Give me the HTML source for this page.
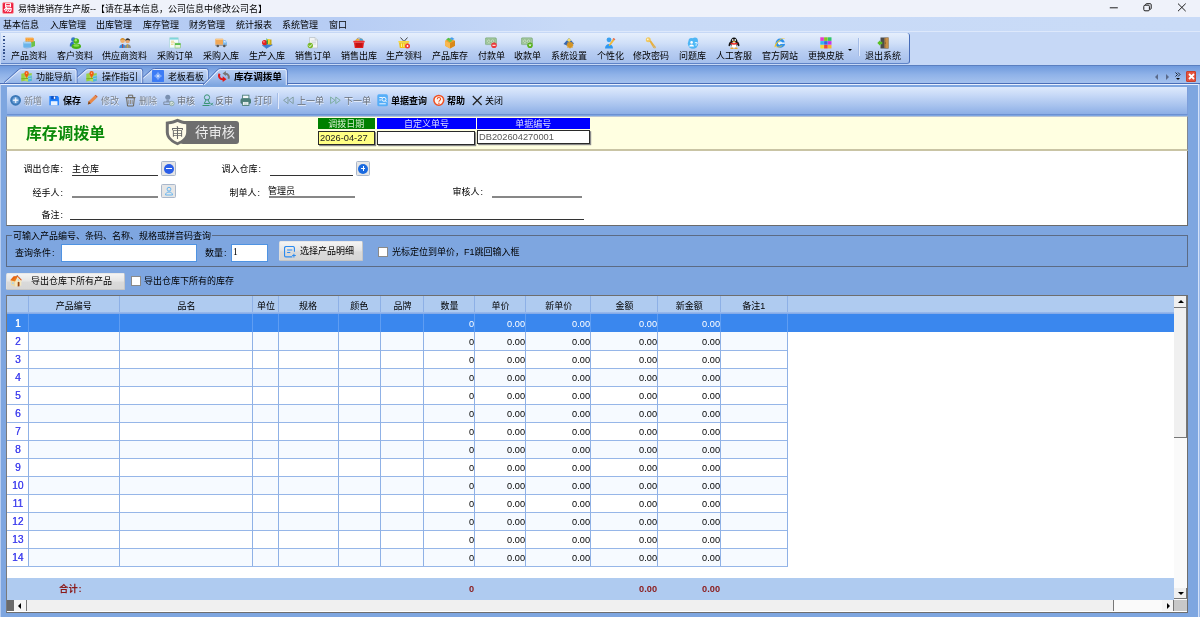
<!DOCTYPE html>
<html lang="zh-CN"><head><meta charset="utf-8"><title>易特进销存生产版</title>
<style>
*{box-sizing:border-box;margin:0;padding:0}
html,body{width:1200px;height:617px;overflow:hidden}
body{position:relative;background:#7ea6e0;font-family:"Liberation Sans","Noto Sans CJK SC",sans-serif;font-size:9px;color:#000;line-height:1}
.ab{position:absolute}
.t{position:absolute;white-space:nowrap;line-height:12px;height:12px;will-change:transform}
.c{text-align:center}
.r{text-align:right}
.b{font-weight:bold}
.co{display:inline-block;width:4.5px;text-align:center}
.g{color:#8290a8}
#title{left:0;top:0;width:1200px;height:17px;background:#eff2fa}
#menu{left:0;top:17px;width:1200px;height:15px;background:linear-gradient(90deg,#b4cbf3 0,#b7cdf4 340px,#c8daf7 570px,#c9dbf7 100%);border-bottom:1px solid #dde8fb}
#tbbg{left:0;top:32px;width:1200px;height:33px;background:#c6d8f6}
#tb{left:1px;top:33px;width:909px;height:31px;border-radius:0 3px 3px 0;background:linear-gradient(#e6effc 0%,#cfdff8 35%,#b9cef2 60%,#a6c0ec 100%);border-bottom:1px solid #5f84c8;border-right:1px solid #466cb8}
#tabs{left:0;top:64.5px;width:1200px;height:19.3px;background:linear-gradient(#6f9add 0%,#8fb2e8 50%,#a5c2ee 100%);border-top:1px solid #5a7fc0;border-bottom:1px solid #4a6eb8}
#frame{left:0;top:83.8px;width:1200px;height:534px;background:#7ea6e0;border-left:1px solid #b7cdf1;border-top:1px solid #eaf1fd}
#itb{left:6.5px;top:87px;width:1181.3px;height:27.5px;background:linear-gradient(#deeafc 0%,#c7d9f7 30%,#a8c3ee 68%,#8dafe6 100%);border-bottom:1px solid #6c91d2;border-right:1px solid #7c9edb}
#yel{left:6px;top:116.1px;width:1182px;height:34.9px;background:#ffffe1;border-bottom:2px solid #c9c4a4;border-left:0.7px solid #7f8794;border-right:0.7px solid #7f8794;border-top:0.7px solid #b9c4d4}
#wht{left:6px;top:151px;width:1182px;height:74.8px;background:#fff;border-left:0.7px solid #7f8794;border-right:0.8px solid #6a6a6a;border-bottom:0.8px solid #6a6a6a}
.ul{position:absolute;height:1px;background:#222}
.inp{position:absolute;background:#fff;border:1px solid #4f93e2}
.btn{position:absolute;background:linear-gradient(#f4f4f4 0%,#e6e6e6 45%,#dadada 55%,#d6d6d6 100%);border:1px solid #c6c6c6;border-top-color:#e8e8e8;border-left-color:#dedede;border-radius:1.5px}
.cb{position:absolute;width:10px;height:10px;background:#fff;border:1px solid #8a8a8a}
.hc{position:absolute;top:296px;height:17px;background:#afcbf0;border-right:1px solid #8fb0e4}
.vl{position:absolute;width:1px;background:#8fb1e6}
.hl{position:absolute;height:1px;background:#96b6e8}
</style></head><body>

<div class="ab" id="title"></div>
<div class="ab" style="left:1.5px;top:2px;width:12px;height:12px;border-radius:2px;background:#ee2040;border:0.5px solid #f8a0a8"></div>
<div class="t b" style="left:1.5px;top:2px;width:12px;text-align:center;color:#fff;font-size:9px">易</div>
<div class="t" style="left:18px;top:2.5px">易特进销存生产版--【请在基本信息，公司信息中修改公司名】</div>
<svg class="ab" style="left:1100px;top:0" width="100" height="17" viewBox="0 0 100 17"><g stroke="#1e1e1e" stroke-width="1" fill="none"><path d="M9.8 7.8h8"/><rect x="43.8" y="5.2" width="5.6" height="5.6" rx="1.2"/><path d="M45.6 5v-0.3q0-1 1-1h3.6q1 0 1 1v3.6q0 1-1 1h-0.5"/><path d="M78 3.6l7.7 7.6M85.7 3.6l-7.7 7.6"/></g></svg>
<div class="ab" id="menu"></div>
<div class="t" style="left:3px;top:18.5px">基本信息</div>
<div class="t" style="left:49.5px;top:18.5px">入库管理</div>
<div class="t" style="left:96.3px;top:18.5px">出库管理</div>
<div class="t" style="left:142.7px;top:18.5px">库存管理</div>
<div class="t" style="left:189px;top:18.5px">财务管理</div>
<div class="t" style="left:235.5px;top:18.5px">统计报表</div>
<div class="t" style="left:282px;top:18.5px">系统管理</div>
<div class="t" style="left:328.7px;top:18.5px">窗口</div>
<div class="ab" id="tbbg"></div><div class="ab" id="tb"></div>
<div class="ab" style="left:3px;top:36px;width:2px;height:24px;background:repeating-linear-gradient(#34508c 0 1.5px,transparent 1.5px 3.3px)"></div>
<svg class="ab" style="left:23.0px;top:36.6px" width="12" height="12" viewBox="0 0 12 12"><path d="M2.5 0.8h7.5l0.8 0.8v4.4h-8.3z" fill="#f59a2e"/><path d="M2.5 0.8h7.5l0.8 0.8h-8.3z" fill="#fbc070"/><path d="M4.5 2v4M7 2v4M2.5 3.5h8" stroke="#f8b860" stroke-width="0.5"/><rect x="0.3" y="4.8" width="8" height="6" rx="0.8" fill="#6ab4ea"/><rect x="0.3" y="4.8" width="8" height="1.6" rx="0.8" fill="#a8d4f4"/><path d="M8.3 5.2l3.7-1.2v5l-3.7 1.5z" fill="#6cc24a"/><path d="M0.8 11l3 0.8 4.5-1z" fill="#a0b8d8"/></svg>
<div class="t c" style="left:9.0px;width:40px;top:49.5px">产品资料</div>
<svg class="ab" style="left:68.7px;top:36.6px" width="12" height="12" viewBox="0 0 12 12"><circle cx="4.3" cy="2.5" r="2.2" fill="#3a78c8"/><path d="M0.8 9.5c-0.3-4 2-5 4-5v5z" fill="#3570c0"/><circle cx="7.3" cy="4" r="2.8" fill="#4cb818"/><circle cx="6.8" cy="3.3" r="1.2" fill="#a8e870"/><ellipse cx="7.3" cy="9.2" rx="4.7" ry="2.7" fill="#46b014"/><ellipse cx="7.3" cy="8.5" rx="3" ry="1.2" fill="#8ade50"/></svg>
<div class="t c" style="left:54.7px;width:40px;top:49.5px">客户资料</div>
<svg class="ab" style="left:118.8px;top:36.6px" width="12" height="12" viewBox="0 0 12 12"><circle cx="3.6" cy="3.8" r="2.3" fill="#f0b070"/><path d="M1.2 3.5c0-3.5 5-3.5 5 0-1.5-1.2-3.5-1.2-5 0z" fill="#d08a20"/><path d="M0.3 11c0-5 6.6-5 6.6 0z" fill="#3a8ee0"/><path d="M3.6 7v4" stroke="#c03030" stroke-width="0.8"/><circle cx="8.6" cy="4" r="2.3" fill="#e8a870"/><path d="M6.2 3.8c0-3.5 5-3.5 5 0-1.5-1.2-3.5-1.2-5 0z" fill="#333"/><path d="M5.5 11c0-5 6.5-5 6.5 0z" fill="#8c8c8c"/><path d="M8.6 7.2v3.8" stroke="#d0b030" stroke-width="0.8"/></svg>
<div class="t c" style="left:100.3px;width:49px;top:49.5px">供应商资料</div>
<svg class="ab" style="left:169.3px;top:36.6px" width="12" height="12" viewBox="0 0 12 12"><rect x="0.5" y="0.5" width="9" height="10.5" rx="0.6" fill="#f4fbfb" stroke="#a8d4d8" stroke-width="0.7"/><rect x="0.8" y="0.8" width="8.4" height="1.8" fill="#7fd6dc"/><path d="M2 4.2h3M2 5.8h4M2 7.4h2.5" stroke="#e8c860" stroke-width="0.7"/><rect x="6" y="6.3" width="5.5" height="4.7" rx="0.5" fill="#e8f4e0" stroke="#7cc060" stroke-width="0.6"/><rect x="6" y="6.3" width="5.5" height="1.6" fill="#4cb840"/></svg>
<div class="t c" style="left:155.3px;width:40px;top:49.5px">采购订单</div>
<svg class="ab" style="left:215.3px;top:36.6px" width="12" height="12" viewBox="0 0 12 12"><rect x="0.3" y="1.8" width="7.8" height="6" rx="0.5" fill="#f0a858"/><rect x="0.3" y="1.8" width="7.8" height="1.2" fill="#f8c888"/><path d="M8.1 3.2h2.4l1.4 2.3v2.8h-3.8z" fill="#7ab8ee"/><path d="M8.8 3.9h1.5l0.9 1.5h-2.4z" fill="#d8ecfc"/><rect x="0.3" y="7.8" width="11.6" height="0.9" fill="#8a8a8a"/><circle cx="2.8" cy="9" r="1.3" fill="#555"/><circle cx="9.3" cy="9" r="1.3" fill="#555"/></svg>
<div class="t c" style="left:201.3px;width:40px;top:49.5px">采购入库</div>
<svg class="ab" style="left:261.0px;top:36.6px" width="12" height="12" viewBox="0 0 12 12"><path d="M1.2 8l6.3-3 4.3 3-6 3.5z" fill="#3c7cd4"/><path d="M1.2 8l4.6 3.5v0.5l-4.6-3.5z" fill="#2a5ca8"/><circle cx="3.6" cy="5.6" r="2.6" fill="#e42020"/><circle cx="2.9" cy="4.8" r="0.9" fill="#f88"/><rect x="6.5" y="2" width="2.3" height="5.5" fill="#f4d428"/><rect x="8.8" y="2.5" width="1.7" height="5.5" fill="#c8a818"/><path d="M5.5 1l1.5 2.5v3.5h-1.5z" fill="#38a038"/></svg>
<div class="t c" style="left:247.0px;width:40px;top:49.5px">生产入库</div>
<svg class="ab" style="left:306.8px;top:36.6px" width="12" height="12" viewBox="0 0 12 12"><path d="M2.5 0.5h5.5l2.5 2.5v8h-8z" fill="#f2f4f4" stroke="#b8c0c4" stroke-width="0.7"/><path d="M8 0.5v2.5h2.5" fill="#dde2e4" stroke="#b8c0c4" stroke-width="0.5"/><path d="M4.5 4h4.5M4.5 5.5h4.5M6 7h3" stroke="#c8ced0" stroke-width="0.6"/><circle cx="3.3" cy="8.5" r="2.7" fill="#78b828"/><path d="M1.9 8.5l1 1.2 1.9-2.3" stroke="#fff" stroke-width="0.9" fill="none"/></svg>
<div class="t c" style="left:292.8px;width:40px;top:49.5px">销售订单</div>
<svg class="ab" style="left:352.7px;top:36.6px" width="12" height="12" viewBox="0 0 12 12"><path d="M3 4c0-2 1.5-3 3-3s3 1 3 3" fill="none" stroke="#888" stroke-width="0.8"/><path d="M2 3.8l2-2 2.5 0.5 2.5-0.8 1.5 2.3z" fill="#f0b030"/><path d="M6.5 2l2.5-0.5 1.5 2.3h-4z" fill="#40a0e0"/><rect x="0.3" y="3.8" width="11.4" height="1.8" rx="0.6" fill="#f03030"/><path d="M1 5.6h10l-0.8 5.4h-8.4z" fill="#e01818"/><path d="M3 7h6M3 9h6" stroke="#a01010" stroke-width="0.9"/></svg>
<div class="t c" style="left:338.7px;width:40px;top:49.5px">销售出库</div>
<svg class="ab" style="left:398.0px;top:36.6px" width="12" height="12" viewBox="0 0 12 12"><path d="M2.5 0.5l3.5 4 3.5-4" fill="none" stroke="#333" stroke-width="0.9"/><rect x="0.3" y="4" width="11" height="1.6" rx="0.5" fill="#f8d838"/><path d="M1 5.6h9.6l-0.8 5.4h-8z" fill="#f0c418"/><path d="M3.5 6.5v3.5M5.8 6.5v3.5M8 6.5v2" stroke="#fff4a0" stroke-width="0.9"/><circle cx="9.5" cy="9" r="2.5" fill="#f03838"/><circle cx="9.5" cy="9" r="0.9" fill="#fff"/></svg>
<div class="t c" style="left:384.0px;width:40px;top:49.5px">生产领料</div>
<svg class="ab" style="left:443.7px;top:36.6px" width="12" height="12" viewBox="0 0 12 12"><path d="M1 3.8l5-2.3 5 2.3v5l-5 2.7-5-2.7z" fill="#f0a030"/><path d="M6 6.2l5-2.4v5l-5 2.7z" fill="#d88818"/><path d="M1 3.8l5 2.4v5.3l-5-2.7z" fill="#f8b850"/><path d="M2 2.6l2.5-1.8 2.5 1.5-2.5 1.5z" fill="#58c040"/><path d="M5.5 1.2l2.5-1 2.5 1.8-2.5 1.3z" fill="#48a0e8"/><path d="M4 4l2.5-1.5 2 1.3-2.5 1.5z" fill="#68c848"/></svg>
<div class="t c" style="left:429.7px;width:40px;top:49.5px">产品库存</div>
<svg class="ab" style="left:485.0px;top:36.6px" width="12" height="12" viewBox="0 0 12 12"><rect x="0.2" y="0.8" width="11.3" height="6.8" rx="1.2" fill="#8fb98c" stroke="#7aa878" stroke-width="0.5"/><rect x="1.3" y="1.9" width="9.1" height="4.6" rx="0.6" fill="none" stroke="#b8d8b0" stroke-width="0.5"/><circle cx="3.8" cy="4.2" r="1.3" fill="none" stroke="#dcecd4" stroke-width="0.7"/><circle cx="7.6" cy="4.2" r="1.3" fill="none" stroke="#dcecd4" stroke-width="0.7"/><circle cx="9" cy="8.3" r="2.8" fill="#ea3a3a"/><rect x="7.4" y="7.8" width="3.2" height="1" fill="#fff"/></svg>
<div class="t c" style="left:475.5px;width:31px;top:49.5px">付款单</div>
<svg class="ab" style="left:521.3px;top:36.6px" width="12" height="12" viewBox="0 0 12 12"><rect x="0.2" y="0.8" width="11.3" height="6.8" rx="1.2" fill="#8fb98c" stroke="#7aa878" stroke-width="0.5"/><rect x="1.3" y="1.9" width="9.1" height="4.6" rx="0.6" fill="none" stroke="#b8d8b0" stroke-width="0.5"/><circle cx="3.8" cy="4.2" r="1.3" fill="none" stroke="#dcecd4" stroke-width="0.7"/><circle cx="7.6" cy="4.2" r="1.3" fill="none" stroke="#dcecd4" stroke-width="0.7"/><circle cx="9" cy="8.3" r="2.8" fill="#58b020"/><path d="M7.5 7.6h3l-1.5 1.8z" fill="#fff"/></svg>
<div class="t c" style="left:511.8px;width:31px;top:49.5px">收款单</div>
<svg class="ab" style="left:562.7px;top:36.6px" width="12" height="12" viewBox="0 0 12 12"><path d="M0.5 7l5.5-6 5 5.5-5 3z" fill="#3868b0"/><path d="M6 1l-2 2.5 2.2 1.5 2-1.8z" fill="#f4e070"/><circle cx="7" cy="8" r="3" fill="#d89828"/><circle cx="7" cy="8" r="1.2" fill="#503818"/><path d="M7 4.5v7M3.5 8h7M4.5 5.5l5 5M9.5 5.5l-5 5" stroke="#d89828" stroke-width="0.9"/></svg>
<div class="t c" style="left:548.7px;width:40px;top:49.5px">系统设置</div>
<svg class="ab" style="left:604.0px;top:36.6px" width="12" height="12" viewBox="0 0 12 12"><circle cx="5" cy="2.8" r="2.4" fill="#38a0f0"/><path d="M1 11.5c0-6 8-6 8 0z" fill="#2e98f0"/><path d="M9.5 1l1.8 1.2-5 6.3-1.5 0.5 0.2-1.5z" fill="#f0b838"/><path d="M9.5 1l1.8 1.2-0.8 1-1.8-1.2z" fill="#e86060"/></svg>
<div class="t c" style="left:594.5px;width:31px;top:49.5px">个性化</div>
<svg class="ab" style="left:645.3px;top:36.6px" width="12" height="12" viewBox="0 0 12 12"><circle cx="3.3" cy="2.8" r="2.5" fill="#f0c860"/><circle cx="2.8" cy="2.3" r="0.9" fill="#fff4d0"/><path d="M4.3 4.3l1.5-1 5.2 7-0.8 1.2-1.8-0.5z" fill="#e8b040"/><path d="M8 9.5l1.5-1M9 10.8l1.5-1" stroke="#b8b8b8" stroke-width="0.8"/></svg>
<div class="t c" style="left:631.3px;width:40px;top:49.5px">修改密码</div>
<svg class="ab" style="left:686.7px;top:36.6px" width="12" height="12" viewBox="0 0 12 12"><circle cx="6" cy="6.6" r="5.2" fill="#4eb6f5"/><circle cx="4.2" cy="3.6" r="2.6" fill="#4eb6f5"/><circle cx="8" cy="3.4" r="2.9" fill="#4eb6f5"/><circle cx="4.6" cy="5.4" r="1.3" fill="#fff"/><path d="M2.2 9.6c0-2.9 4.8-2.9 4.8 0z" fill="#fff"/><text x="7.3" y="9" font-size="5.5" font-weight="bold" fill="#fff" font-family="Liberation Sans,sans-serif">?</text></svg>
<div class="t c" style="left:677.2px;width:31px;top:49.5px">问题库</div>
<svg class="ab" style="left:728.0px;top:36.6px" width="12" height="12" viewBox="0 0 12 12"><ellipse cx="6" cy="5.5" rx="3.6" ry="5" fill="#111"/><ellipse cx="1.8" cy="7" rx="1" ry="2.3" fill="#111" transform="rotate(20 1.8 7)"/><ellipse cx="10.2" cy="7" rx="1" ry="2.3" fill="#111" transform="rotate(-20 10.2 7)"/><ellipse cx="6" cy="8" rx="2.5" ry="2.9" fill="#fff"/><ellipse cx="4.8" cy="3" rx="0.8" ry="1.1" fill="#fff"/><ellipse cx="7.2" cy="3" rx="0.8" ry="1.1" fill="#fff"/><ellipse cx="6" cy="4.7" rx="1.5" ry="0.6" fill="#f0a020"/><path d="M2.6 5.6c2 1 5 1 6.8 0v1.5c-2 1-5 1-6.8 0z" fill="#e82020"/><ellipse cx="4" cy="11.2" rx="1.8" ry="0.8" fill="#f0a020"/><ellipse cx="8" cy="11.2" rx="1.8" ry="0.8" fill="#f0a020"/></svg>
<div class="t c" style="left:714.0px;width:40px;top:49.5px">人工客服</div>
<svg class="ab" style="left:774.0px;top:36.6px" width="12" height="12" viewBox="0 0 12 12"><circle cx="6.2" cy="6.2" r="4.6" fill="#2a90ec"/><circle cx="6.2" cy="6.2" r="2" fill="#c8e4fc"/><rect x="4" y="5.5" width="6.8" height="1.4" fill="#fff"/><rect x="6.2" y="6.9" width="4.6" height="1.6" fill="#2a90ec"/><path d="M0.8 10.5c-1.5-3 6-11 10.5-9.3-4-0.3-9 5-9.5 8.3z" fill="#f4c428"/><path d="M1.8 9.5c1.5 1.5 5 0 6.5-1" fill="none" stroke="#f4c428" stroke-width="0.8"/></svg>
<div class="t c" style="left:760.0px;width:40px;top:49.5px">官方网站</div>
<svg class="ab" style="left:819.7px;top:36.6px" width="12" height="12" viewBox="0 0 12 12"><rect x="0.3" y="0.3" width="3.6" height="3.6" fill="#e838c8"/><rect x="4.1" y="0.3" width="3.6" height="3.6" fill="#84c420"/><rect x="7.9" y="0.3" width="3.6" height="3.6" fill="#30c468"/><rect x="0.3" y="4.1" width="3.6" height="3.6" fill="#30b4f0"/><rect x="4.1" y="4.1" width="3.6" height="3.6" fill="#3464e4"/><rect x="7.9" y="4.1" width="3.6" height="3.6" fill="#c434e4"/><rect x="0.3" y="7.9" width="3.6" height="3.6" fill="#f4d834"/><rect x="4.1" y="7.9" width="3.6" height="3.6" fill="#f04830"/><rect x="7.9" y="7.9" width="3.6" height="3.6" fill="#f4b434"/></svg>
<div class="t c" style="left:805.7px;width:40px;top:49.5px">更换皮肤</div>
<svg class="ab" style="left:877.0px;top:36.6px" width="12" height="12" viewBox="0 0 12 12"><rect x="3.5" y="0.5" width="8" height="11" fill="#4c4c4c"/><path d="M7.5 1l4 -0.5v11l-4 -0.5z" fill="#c8924a"/><path d="M8.5 1v10" stroke="#a87030" stroke-width="0.6"/><circle cx="8.3" cy="6" r="0.5" fill="#604010"/><path d="M0.3 4.8h2.2v-1.6l2.8 2.8-2.8 2.8v-1.6h-2.2z" fill="#58c020" transform="rotate(180 2.8 6)"/></svg>
<div class="t c" style="left:863.0px;width:40px;top:49.5px">退出系统</div>
<div class="ab" style="left:848px;top:48.5px;width:0;height:0;border:2px solid transparent;border-top:2.5px solid #000"></div>
<div class="ab" style="left:857.5px;top:37.5px;width:1px;height:18px;background:#a4bce6"></div><div class="ab" style="left:858.5px;top:37.5px;width:1px;height:18px;background:#e4ecfb"></div>
<div class="ab" id="tabs"></div>
<svg class="ab" width="0" height="0"><defs><linearGradient id="gi" x1="0" y1="0" x2="0" y2="1"><stop offset="0" stop-color="#c9daf7"/><stop offset="1" stop-color="#94b5e8"/></linearGradient><linearGradient id="ga" x1="0" y1="0" x2="0" y2="1"><stop offset="0" stop-color="#bcd2f4"/><stop offset="0.5" stop-color="#a3bfed"/><stop offset="1" stop-color="#7ea6e0"/></linearGradient></defs></svg>
<svg class="ab" style="left:137px;top:67.9px;z-index:0" width="73.30000000000001" height="15" viewBox="0 0 73.30000000000001 15"><path d="M-0.5 15L14.2 1.9Q15.6 0.5 17.6 0.5H69.30000000000001Q71.30000000000001 0.5 71.30000000000001 3V15z" fill="url(#gi)"/><path d="M-0.5 15L14.2 1.9Q15.6 0.5 17.6 0.5H69.30000000000001Q71.30000000000001 0.5 71.30000000000001 3V15" fill="none" stroke="#4468b4" stroke-width="0.9"/><path d="M1 15L15 2.8Q16.2 1.5 17.9 1.5H68.9Q70.30000000000001 1.5 70.30000000000001 3.4V15" fill="none" stroke="#f0f5fe" stroke-width="0.9" stroke-opacity="0.85"/></svg>
<svg class="ab" style="left:152.2px;top:70.2px;z-index:3" width="12" height="12" viewBox="0 0 11 11"><rect x="0" y="0" width="11" height="11" rx="0.8" fill="#3d7cf5"/><circle cx="5.5" cy="5.5" r="2.1" fill="#6a9cf8" stroke="#a9c8ff" stroke-width="0.6"/><path d="M5.5 1.8v7.4M1.8 5.5h7.4" stroke="#a9c8ff" stroke-width="0.6"/><circle cx="5.5" cy="5.5" r="0.9" fill="#e4eeff"/></svg>
<div class="t" style="left:167.7px;top:71px">老板看板</div>
<svg class="ab" style="left:71px;top:67.9px;z-index:0" width="73.69999999999999" height="15" viewBox="0 0 73.69999999999999 15"><path d="M-0.5 15L14.2 1.9Q15.6 0.5 17.6 0.5H69.69999999999999Q71.69999999999999 0.5 71.69999999999999 3V15z" fill="url(#gi)"/><path d="M-0.5 15L14.2 1.9Q15.6 0.5 17.6 0.5H69.69999999999999Q71.69999999999999 0.5 71.69999999999999 3V15" fill="none" stroke="#4468b4" stroke-width="0.9"/><path d="M1 15L15 2.8Q16.2 1.5 17.9 1.5H69.29999999999998Q70.69999999999999 1.5 70.69999999999999 3.4V15" fill="none" stroke="#f0f5fe" stroke-width="0.9" stroke-opacity="0.85"/></svg>
<svg class="ab" style="left:86px;top:71px;z-index:3" width="11" height="11" viewBox="0 0 11 11"><path d="M0.3 2.8l3.4-0.8 3.4 0.8 3.6-0.8v7.7l-3.6 0.8-3.4-0.8-3.4 0.8z" fill="#9ad044"/><path d="M3.7 2l3.4 0.8v7.7l-3.4-0.8z" fill="#b4dc6c"/><path d="M0.3 7.3l10.4-0.5v1l-10.4 0.5z" fill="#78b020"/><path d="M7.1 5l3.6-0.8v5.5l-3.6 0.8z" fill="#4ab4e8"/><path d="M7.1 5.3l3.6-0.6M7.1 7.8l3.6-0.6" stroke="#b8e4c0" stroke-width="0.7"/><path d="M5.6 0a2.2 2.2 0 0 1 2.2 2.2c0 1.7-2.2 4.8-2.2 4.8s-2.2-3.1-2.2-4.8a2.2 2.2 0 0 1 2.2-2.2z" fill="#f05c10"/><circle cx="5.6" cy="2.1" r="0.7" fill="#ffe0c0"/></svg>
<div class="t" style="left:101.7px;top:71px">操作指引</div>
<svg class="ab" style="left:4px;top:67.9px;z-index:0" width="75" height="15" viewBox="0 0 75 15"><path d="M-0.5 15L14.2 1.9Q15.6 0.5 17.6 0.5H71Q73 0.5 73 3V15z" fill="url(#gi)"/><path d="M-0.5 15L14.2 1.9Q15.6 0.5 17.6 0.5H71Q73 0.5 73 3V15" fill="none" stroke="#4468b4" stroke-width="0.9"/><path d="M1 15L15 2.8Q16.2 1.5 17.9 1.5H70.6Q72 1.5 72 3.4V15" fill="none" stroke="#f0f5fe" stroke-width="0.9" stroke-opacity="0.85"/></svg>
<svg class="ab" style="left:20.5px;top:71px;z-index:3" width="11" height="11" viewBox="0 0 11 11"><path d="M0.3 2.8l3.4-0.8 3.4 0.8 3.6-0.8v7.7l-3.6 0.8-3.4-0.8-3.4 0.8z" fill="#9ad044"/><path d="M3.7 2l3.4 0.8v7.7l-3.4-0.8z" fill="#b4dc6c"/><path d="M0.3 7.3l10.4-0.5v1l-10.4 0.5z" fill="#78b020"/><path d="M7.1 5l3.6-0.8v5.5l-3.6 0.8z" fill="#4ab4e8"/><path d="M7.1 5.3l3.6-0.6M7.1 7.8l3.6-0.6" stroke="#b8e4c0" stroke-width="0.7"/><path d="M5.6 0a2.2 2.2 0 0 1 2.2 2.2c0 1.7-2.2 4.8-2.2 4.8s-2.2-3.1-2.2-4.8a2.2 2.2 0 0 1 2.2-2.2z" fill="#f05c10"/><circle cx="5.6" cy="2.1" r="0.7" fill="#ffe0c0"/></svg>
<div class="t" style="left:35.7px;top:71px">功能导航</div>
<svg class="ab" style="left:203px;top:67.9px;z-index:2" width="86.30000000000001" height="17.2" viewBox="0 0 86.30000000000001 17.2"><path d="M-0.5 17.2L14.2 1.9Q15.6 0.5 17.6 0.5H82.30000000000001Q84.30000000000001 0.5 84.30000000000001 3V17.2z" fill="url(#ga)"/><path d="M-0.5 17.2L14.2 1.9Q15.6 0.5 17.6 0.5H82.30000000000001Q84.30000000000001 0.5 84.30000000000001 3V17.2" fill="none" stroke="#4468b4" stroke-width="0.9"/><path d="M1 17.2L15 2.8Q16.2 1.5 17.9 1.5H81.9Q83.30000000000001 1.5 83.30000000000001 3.4V17.2" fill="none" stroke="#f0f5fe" stroke-width="0.9" stroke-opacity="1"/></svg>
<svg class="ab" style="left:218px;top:70.2px;z-index:3" width="12" height="12" viewBox="0 0 11 11"><path d="M9.5 8a3 3 0 0 0-3-4.5" fill="none" stroke="#777" stroke-width="1.8"/><path d="M7.2 1l-3 2.3 3 2.2z" fill="#777"/><path d="M1.5 3.5a3.3 3.3 0 0 0 3.3 5" fill="none" stroke="#e01818" stroke-width="1.9"/><path d="M4.3 5.8l3.5 2.7-3.5 2.5z" fill="#e01818"/></svg>
<div class="t b" style="left:234.2px;top:71px;font-size:9.6px;z-index:3">库存调拨单</div>
<div class="ab" style="left:1154.5px;top:73.7px;width:0;height:0;border:3px solid transparent;border-right:3.5px solid #5a6a8a;border-left:none"></div>
<div class="ab" style="left:1165.5px;top:73.7px;width:0;height:0;border:3px solid transparent;border-left:3.5px solid #5a6a8a;border-right:none"></div>
<svg class="ab" style="left:1175px;top:72.3px" width="6" height="5" viewBox="0 0 6 5"><path d="M0.5 0.5l2 2-2 2M3 0.5l2 2-2 2" fill="none" stroke="#000" stroke-width="0.8"/></svg>
<div class="ab" style="left:1175.7px;top:78px;width:0;height:0;border:2px solid transparent;border-top:2.5px solid #000"></div>
<div class="ab" style="left:1185.6px;top:71.2px;width:10.8px;height:10.8px;background:#e4523c;border:1px solid #c8402c;border-radius:1px"></div>
<svg class="ab" style="left:1185.5px;top:71.1px" width="11" height="11" viewBox="0 0 11 11"><path d="M3 3l5 5M8 3l-5 5" stroke="#fff" stroke-width="1.8"/></svg>
<div class="ab" id="frame"></div>
<div class="ab" style="left:1197.7px;top:84px;width:0.8px;height:533px;background:#d4e2f9"></div><div class="ab" style="left:1198.5px;top:84px;width:1.5px;height:533px;background:#9fbcea"></div>
<div class="ab" id="itb"></div>
<svg class="ab" style="left:10.2px;top:94.2px" width="12" height="13" viewBox="0 0 12 13"><circle cx="5.6" cy="6.3" r="5.4" fill="#3b78b8"/><circle cx="5.6" cy="6.3" r="3.4" fill="#6a9ed4"/><path d="M5.6 3.6v5.4M2.9 6.3h5.4" stroke="#d8e6f8" stroke-width="1.5"/><circle cx="5.6" cy="6.3" r="1.1" fill="#eef4fc"/></svg>
<div class="t " style="left:24px;top:94.7px;color:#7c828a;text-shadow:0.5px 0.5px 0 rgba(255,255,255,0.75)">新增</div>
<svg class="ab" style="left:49px;top:94.2px" width="12" height="13" viewBox="0 0 12 13"><path d="M0.4 2h8.3l1.2 1.2v8h-9.5z" fill="#1e80ff"/><rect x="2.2" y="2" width="5" height="3.3" fill="#1050c0"/><rect x="4.8" y="2.5" width="1.5" height="2.3" fill="#fff"/><rect x="1.8" y="7.2" width="6.7" height="4" fill="#e8f2ff"/></svg>
<div class="t b" style="left:62.5px;top:94.7px">保存</div>
<svg class="ab" style="left:87.3px;top:94.2px" width="12" height="13" viewBox="0 0 12 13"><path d="M0.8 10.5l0.9-3.2 6-5.8 2.2 2.2-6 5.8z" fill="#e88848"/><path d="M0.8 10.5l0.9-3.2 2.2 2.2z" fill="#7a4820"/><path d="M7.7 1.5l1-0.8 2 2-0.8 1z" fill="#d06030"/></svg>
<div class="t " style="left:100.7px;top:94.7px;color:#7c828a;text-shadow:0.5px 0.5px 0 rgba(255,255,255,0.75)">修改</div>
<svg class="ab" style="left:125px;top:94.2px" width="12" height="13" viewBox="0 0 12 13"><path d="M1.6 3.8h7.8l-0.9 8.2h-6z" fill="none" stroke="#6c665a" stroke-width="1"/><path d="M0.5 3.6h10M3.3 1.2h4.4v2.2" fill="none" stroke="#6c665a" stroke-width="1"/><path d="M3.6 1.2v2.2" stroke="#6c665a" stroke-width="1"/><path d="M3.8 5.8v4.2M5.5 5.8v4.2M7.2 5.8v4.2" stroke="#8a8070" stroke-width="0.8"/></svg>
<div class="t " style="left:139px;top:94.7px;color:#7c828a;text-shadow:0.5px 0.5px 0 rgba(255,255,255,0.75)">删除</div>
<svg class="ab" style="left:163px;top:94.2px" width="12" height="13" viewBox="0 0 12 13"><circle cx="4.8" cy="3.2" r="2.5" fill="#7a90b0"/><path d="M3.8 5.5h2l0.8 2.5h-3.6z" fill="#8a9cb8"/><path d="M0.8 8h8v2.5h-8z" fill="none" stroke="#7a8aa0" stroke-width="0.9"/><circle cx="8.8" cy="9.5" r="2.3" fill="#dfe8e4" stroke="#7a9a90" stroke-width="0.7"/><path d="M7.8 9.5l0.8 0.8 1.3-1.6" fill="none" stroke="#5a8a78" stroke-width="0.7"/></svg>
<div class="t " style="left:177px;top:94.7px;color:#686e76;text-shadow:0.5px 0.5px 0 rgba(255,255,255,0.75)">审核</div>
<svg class="ab" style="left:201.5px;top:94.2px" width="12" height="13" viewBox="0 0 12 13"><circle cx="5" cy="3.4" r="2.6" fill="none" stroke="#3a9474" stroke-width="1"/><path d="M4 6l-1.8 3.5h5.6l-1.8-3.5" fill="none" stroke="#3a9474" stroke-width="1"/><path d="M0.5 11.5h7" stroke="#3a9474" stroke-width="1"/><path d="M8.3 8.8l2.7 2.7M11 8.8l-2.7 2.7" stroke="#3a9474" stroke-width="0.9"/></svg>
<div class="t " style="left:215px;top:94.7px;color:#686e76;text-shadow:0.5px 0.5px 0 rgba(255,255,255,0.75)">反审</div>
<svg class="ab" style="left:240px;top:94.2px" width="12" height="13" viewBox="0 0 12 13"><rect x="0.5" y="4.3" width="10.5" height="5.7" rx="1.8" fill="#4c7e78"/><rect x="2.6" y="1.2" width="6.3" height="3.4" fill="#f4f8f8" stroke="#4c7e78" stroke-width="0.9"/><rect x="2.6" y="7.5" width="6.3" height="4" fill="#f4f8f8" stroke="#4c7e78" stroke-width="0.9"/><path d="M4 9h3.5M4 10.3h3.5" stroke="#8aa8a4" stroke-width="0.5"/></svg>
<div class="t " style="left:254.3px;top:94.7px;color:#686e76;text-shadow:0.5px 0.5px 0 rgba(255,255,255,0.75)">打印</div>
<div class="ab" style="left:276.7px;top:92.5px;width:1px;height:16px;background:#a4bce6"></div><div class="ab" style="left:277.7px;top:92.5px;width:1px;height:16px;background:#e2ebfb"></div>
<svg class="ab" style="left:283px;top:94.2px" width="12" height="13" viewBox="0 0 12 13"><path d="M5 3v6.6l-4.4-3.3zM10.2 3v6.6l-4.4-3.3z" fill="none" stroke="#7d9a9a" stroke-width="0.9"/></svg>
<div class="t " style="left:296.7px;top:94.7px;color:#686e76;text-shadow:0.5px 0.5px 0 rgba(255,255,255,0.75)">上一单</div>
<svg class="ab" style="left:329.8px;top:94.2px" width="12" height="13" viewBox="0 0 12 13"><path d="M0.6 3v6.6l4.4-3.3zM5.8 3v6.6l4.4-3.3z" fill="none" stroke="#78aa98" stroke-width="0.9"/></svg>
<div class="t " style="left:344px;top:94.7px;color:#686e76;text-shadow:0.5px 0.5px 0 rgba(255,255,255,0.75)">下一单</div>
<svg class="ab" style="left:377.3px;top:94.2px" width="12" height="13" viewBox="0 0 12 13"><rect x="0.3" y="0.3" width="10.6" height="12" rx="1.6" fill="#56aef8"/><path d="M2.3 3.5h3.2M2.3 6h2M2.3 9.8h6.5" stroke="#fff" stroke-width="0.9"/><circle cx="7" cy="5.3" r="2" fill="none" stroke="#fff" stroke-width="0.9"/><path d="M8.4 6.8l1.3 1.4" stroke="#fff" stroke-width="0.9"/></svg>
<div class="t b" style="left:390.7px;top:94.7px">单据查询</div>
<svg class="ab" style="left:432.8px;top:94.2px" width="12" height="13" viewBox="0 0 12 13"><circle cx="5.8" cy="6.3" r="4.9" fill="#fff4ec" stroke="#f04e20" stroke-width="1.5"/><path d="M4.2 5.2c0-2.3 3.4-2.3 3.4-0.2 0 1.4-1.7 1.3-1.7 2.8" fill="none" stroke="#f04e20" stroke-width="1.1"/><circle cx="5.9" cy="9.2" r="0.7" fill="#f04e20"/></svg>
<div class="t b" style="left:446.7px;top:94.7px">帮助</div>
<svg class="ab" style="left:472.3px;top:94.2px" width="12" height="13" viewBox="0 0 12 13"><path d="M0.8 2l8.8 9M9.6 2l-8.8 9" stroke="#222" stroke-width="1.2"/></svg>
<div class="t " style="left:485px;top:94.7px">关闭</div>
<div class="ab" id="yel"></div>
<div class="t b" style="left:25.8px;top:124.8px;font-size:15.8px;line-height:18px;height:18px;color:#0a8a0a">库存调拨单</div>
<div class="ab" style="left:180px;top:121.3px;width:59px;height:23px;border-radius:3px;background:#6e6e6e"></div>
<svg class="ab" style="left:164px;top:118px;will-change:transform" width="28" height="29" viewBox="0 0 28 29"><path d="M1.8 3.8c4.5-0.3 8.5-1.5 11.7-3 3.2 1.5 7.2 2.7 11.7 3v10.5c0 6.5-6.5 10.8-11.7 13-5.2-2.2-11.7-6.5-11.7-13z" fill="#6e6e6e"/><path d="M4.8 6.3c3.3-0.3 6.2-1.2 8.7-2.4 2.5 1.2 5.4 2.1 8.7 2.4v8c0 5-4.8 8.3-8.7 10-3.9-1.7-8.7-5-8.7-10z" fill="#fffce8"/><text x="13.6" y="18.6" text-anchor="middle" font-size="13" fill="#6a6a6a" font-family="Liberation Sans,Noto Sans CJK SC,sans-serif">审</text></svg>
<div class="t" style="left:194.5px;top:124.5px;font-size:13.4px;line-height:16px;height:16px;color:#ececec">待审核</div>
<div class="ab" style="left:318.3px;top:118px;width:56.69999999999999px;height:10.5px;background:#008000"></div>
<div class="t c" style="left:318.3px;width:56.69999999999999px;top:117.5px;color:#d8efd0">调拨日期</div>
<div class="ab" style="left:376.7px;top:118px;width:99.0px;height:10.5px;background:#0000ff"></div>
<div class="t c" style="left:376.7px;width:99.0px;top:117.5px;color:#dcdcff">自定义单号</div>
<div class="ab" style="left:477.3px;top:118px;width:112.69999999999999px;height:10.5px;background:#0000ff"></div>
<div class="t c" style="left:477.3px;width:112.69999999999999px;top:117.5px;color:#dcdcff">单据编号</div>
<div class="ab" style="left:318.3px;top:131px;width:56.69999999999999px;height:14.3px;background:#ffff84;border:1px solid #2a2a2a;box-shadow:1.2px 1.2px 0 #8a8a8a"></div>
<div class="t" style="left:319.5px;top:131.7px;font-size:9.3px;color:#222">2026-04-27</div>
<div class="ab" style="left:376.7px;top:131px;width:98.80000000000001px;height:14.3px;background:#fff;border:1px solid #2a2a2a;box-shadow:1.2px 1.2px 0 #8a8a8a"></div>
<div class="ab" style="left:477.3px;top:130.2px;width:112.99999999999994px;height:14.3px;background:#fff;border:1px solid #2a2a2a;box-shadow:1.2px 1.2px 0 #8a8a8a"></div>
<div class="t" style="left:478.5px;top:130.89999999999998px;font-size:9.3px;color:#585858">DB202604270001</div>
<div class="ab" id="wht"></div>
<div class="t r" style="left:-16px;width:80px;top:163px">调出仓库<span class="co">:</span></div>
<div class="t" style="left:72px;top:162.5px">主仓库</div>
<div class="ul" style="left:72px;top:175px;width:86px;background:#333"></div>
<div class="t r" style="left:-16px;width:80px;top:186.5px">经手人<span class="co">:</span></div>
<div class="ul" style="left:72px;top:196.3px;width:85.5px;height:1.5px;background:#878787"></div>
<div class="t r" style="left:-16px;width:80px;top:208.5px">备注<span class="co">:</span></div>
<div class="ul" style="left:70px;top:218.6px;width:513.7px;background:#333"></div>
<div class="t r" style="left:182px;width:80px;top:163px">调入仓库<span class="co">:</span></div>
<div class="ul" style="left:269.7px;top:175px;width:83.3px;background:#333"></div>
<div class="t r" style="left:180.5px;width:80px;top:186.5px">制单人<span class="co">:</span></div>
<div class="t" style="left:268px;top:185.3px">管理员</div>
<div class="ul" style="left:268.7px;top:196.2px;width:86.3px;height:1.5px;background:#878787"></div>
<div class="t r" style="left:404px;width:80px;top:186.3px">审核人<span class="co">:</span></div>
<div class="ul" style="left:491.7px;top:196.2px;width:90px;height:1.5px;background:#878787"></div>
<div class="ab" style="left:161px;top:161.3px;width:14.8px;height:14.4px;background:#e6e6e6;border:1px solid #a9b7cb;border-radius:1.5px"></div><div class="ab" style="left:163.5px;top:163.5px;width:10px;height:10px;border-radius:5px;background:#2a5ee8"></div><div class="ab" style="left:165.5px;top:168px;width:6px;height:1.4px;background:#fff"></div>
<div class="ab" style="left:161px;top:183.8px;width:14.8px;height:14.4px;background:#e6e6e6;border:1px solid #a9b7cb;border-radius:1.5px"></div><svg class="ab" style="left:163.5px;top:186px" width="10" height="10" viewBox="0 0 10 10"><circle cx="5" cy="3.2" r="1.9" fill="none" stroke="#5ab0f0" stroke-width="0.9"/><path d="M1.5 9c0-4 7-4 7 0z" fill="none" stroke="#5ab0f0" stroke-width="0.9"/></svg>
<div class="ab" style="left:356px;top:161.3px;width:14.4px;height:14.4px;background:#e6e6e6;border:1px solid #a9b7cb;border-radius:1.5px"></div><div class="ab" style="left:358px;top:163.5px;width:10px;height:10px;border-radius:5px;background:#1a6ae0"></div><div class="ab" style="left:360.6px;top:168.1px;width:4.8px;height:0.8px;background:#fff"></div><div class="ab" style="left:362.6px;top:166.1px;width:0.8px;height:4.8px;background:#fff"></div>
<div class="ab" style="left:6.2px;top:235px;width:1181.8px;height:31.8px;border:0.9px solid #5c6b84"></div>
<div class="t" style="left:11.5px;top:230px;background:#7ea6e0;padding:0 1px">可输入产品编号、条码、名称、规格或拼音码查询</div>
<div class="t" style="left:15px;top:246.5px">查询条件<span class="co">:</span></div>
<div class="inp" style="left:61px;top:244px;width:136px;height:17.5px"></div>
<div class="t" style="left:205px;top:246.5px">数量<span class="co">:</span></div>
<div class="inp" style="left:230.5px;top:244px;width:37.5px;height:17.5px"></div><div class="t" style="left:232.5px;top:246.3px;font-family:Liberation Serif,serif;font-size:9.5px">1</div>
<div class="btn" style="left:278.5px;top:240.8px;width:84px;height:20.3px"></div>
<svg class="ab" style="left:283.5px;top:245.5px" width="12.5" height="12.5" viewBox="0 0 12 12"><path d="M8 10.5h-6a1.5 1.5 0 0 1-1.5-1.5v-7a1.5 1.5 0 0 1 1.5-1.5h6.5a1.5 1.5 0 0 1 1.5 1.5v3.5" fill="none" stroke="#2a8af0" stroke-width="1.1"/><path d="M3 3.8h5M3 6.3h3" stroke="#2a8af0" stroke-width="1"/><path d="M9.5 7.5v3.5M7.8 9.2h3.5" stroke="#2a8af0" stroke-width="1"/></svg>
<div class="t" style="left:300px;top:245px">选择产品明细</div>
<div class="cb" style="left:378px;top:246.9px"></div>
<div class="t" style="left:391.5px;top:245.8px">光标定位到单价，F1跳回输入框</div>
<div class="btn" style="left:6px;top:272.5px;width:119px;height:17.5px"></div>
<svg class="ab" style="left:10.3px;top:275.2px" width="12" height="12" viewBox="0 0 12 12"><defs><linearGradient id="rf" x1="0" y1="0" x2="1" y2="1"><stop offset="0" stop-color="#d84408"/><stop offset="1" stop-color="#fa9a20"/></linearGradient></defs><rect x="6.7" y="0.2" width="1.1" height="1.8" fill="#7a4a5a"/><path d="M0.9 5.5l4.1 0.8 0.3 5.5-4.2-2z" fill="#ead9a8"/><path d="M5 6.3l3.3-3.9 3 2.9v5.2l-6 1.3z" fill="#f6e8c0"/><path d="M0.2 5.3l3.4-4 4.5-0.3-3 5.5z" fill="url(#rf)"/><path d="M8.1 1l3.8 4-0.8 0.6-2.8-2.9z" fill="#d85010"/><path d="M7.7 7.2q0.9-0.9 1.8 0v4l-1.8 0.4z" fill="#9c4610"/><circle cx="2.9" cy="8.2" r="0.9" fill="#a8cff0"/><circle cx="8.4" cy="5" r="0.8" fill="#a8cff0"/></svg>
<div class="t" style="left:31px;top:275px">导出仓库下所有产品</div>
<div class="cb" style="left:130.8px;top:276px"></div>
<div class="t" style="left:144px;top:275px">导出仓库下所有的库存</div>
<div class="ab" style="left:6.2px;top:295px;width:1181.8px;height:317.5px;background:#fff;border-top:1px solid #6e6e6e;border-left:0.8px solid #7a7a7a;border-right:1px solid #6e6e6e;border-bottom:1.5px solid #6e6e6e"></div>
<div class="ab" style="left:7px;top:296px;width:1167px;height:15.5px;background:#afcbf0"></div>
<div class="ab" style="left:7px;top:311.5px;width:1167px;height:2.5px;background:linear-gradient(#9dbcec,#7fa6e6)"></div>
<div class="ab" style="left:27.7px;top:296px;width:1px;height:16px;background:#8db0e6"></div>
<div class="ab" style="left:119.0px;top:296px;width:1px;height:16px;background:#8db0e6"></div>
<div class="t c" style="left:28.2px;width:91.3px;top:299.5px">产品编号</div>
<div class="ab" style="left:252.0px;top:296px;width:1px;height:16px;background:#8db0e6"></div>
<div class="t c" style="left:119.5px;width:133.0px;top:299.5px">品名</div>
<div class="ab" style="left:277.9px;top:296px;width:1px;height:16px;background:#8db0e6"></div>
<div class="t c" style="left:252.5px;width:25.899999999999977px;top:299.5px">单位</div>
<div class="ab" style="left:337.7px;top:296px;width:1px;height:16px;background:#8db0e6"></div>
<div class="t c" style="left:278.4px;width:59.80000000000001px;top:299.5px">规格</div>
<div class="ab" style="left:380.0px;top:296px;width:1px;height:16px;background:#8db0e6"></div>
<div class="t c" style="left:338.2px;width:42.30000000000001px;top:299.5px">颜色</div>
<div class="ab" style="left:423.0px;top:296px;width:1px;height:16px;background:#8db0e6"></div>
<div class="t c" style="left:380.5px;width:43.0px;top:299.5px">品牌</div>
<div class="ab" style="left:474.0px;top:296px;width:1px;height:16px;background:#8db0e6"></div>
<div class="t c" style="left:423.5px;width:51.0px;top:299.5px">数量</div>
<div class="ab" style="left:525.0px;top:296px;width:1px;height:16px;background:#8db0e6"></div>
<div class="t c" style="left:474.5px;width:51.0px;top:299.5px">单价</div>
<div class="ab" style="left:590.3px;top:296px;width:1px;height:16px;background:#8db0e6"></div>
<div class="t c" style="left:525.5px;width:65.29999999999995px;top:299.5px">新单价</div>
<div class="ab" style="left:657.1px;top:296px;width:1px;height:16px;background:#8db0e6"></div>
<div class="t c" style="left:590.8px;width:66.80000000000007px;top:299.5px">金额</div>
<div class="ab" style="left:719.7px;top:296px;width:1px;height:16px;background:#8db0e6"></div>
<div class="t c" style="left:657.6px;width:62.60000000000002px;top:299.5px">新金额</div>
<div class="ab" style="left:787.0px;top:296px;width:1px;height:16px;background:#8db0e6"></div>
<div class="t c" style="left:720.2px;width:67.29999999999995px;top:299.5px">备注1</div>
<div class="ab" style="left:7px;top:314.30px;width:1167px;height:18.0px;background:#3a87ee"></div>
<div class="ab" style="left:28px;top:332.30px;width:759.5px;height:18.0px;background:#f6faff"></div>
<div class="ab" style="left:28px;top:368.30px;width:759.5px;height:18.0px;background:#f6faff"></div>
<div class="ab" style="left:28px;top:404.30px;width:759.5px;height:18.0px;background:#f6faff"></div>
<div class="ab" style="left:28px;top:440.30px;width:759.5px;height:18.0px;background:#f6faff"></div>
<div class="ab" style="left:28px;top:476.30px;width:759.5px;height:18.0px;background:#f6faff"></div>
<div class="ab" style="left:28px;top:512.30px;width:759.5px;height:18.0px;background:#f6faff"></div>
<div class="ab" style="left:28px;top:548.30px;width:759.5px;height:18.0px;background:#f6faff"></div>
<div class="t c" style="left:8px;width:19.5px;top:318.30px;color:#fff;font-size:10.3px;text-shadow:0.35px 0 0 #fff">1</div>
<div class="t r" style="left:434.3px;width:40px;top:317.80px;color:#fff;font-size:9.2px">0</div>
<div class="t r" style="left:485.20000000000005px;width:40px;top:317.80px;color:#fff;font-size:9.2px">0.00</div>
<div class="t r" style="left:550px;width:40px;top:317.80px;color:#fff;font-size:9.2px">0.00</div>
<div class="t r" style="left:617.3px;width:40px;top:317.80px;color:#fff;font-size:9.2px">0.00</div>
<div class="t r" style="left:679.8px;width:40px;top:317.80px;color:#fff;font-size:9.2px">0.00</div>
<div class="t c" style="left:8px;width:19.5px;top:336.30px;color:#4444ee;font-size:10.3px;text-shadow:0.35px 0 0 #4444ee">2</div>
<div class="t r" style="left:434.3px;width:40px;top:335.80px;color:#000;font-size:9.2px">0</div>
<div class="t r" style="left:485.20000000000005px;width:40px;top:335.80px;color:#000;font-size:9.2px">0.00</div>
<div class="t r" style="left:550px;width:40px;top:335.80px;color:#000;font-size:9.2px">0.00</div>
<div class="t r" style="left:617.3px;width:40px;top:335.80px;color:#000;font-size:9.2px">0.00</div>
<div class="t r" style="left:679.8px;width:40px;top:335.80px;color:#000;font-size:9.2px">0.00</div>
<div class="hl" style="left:7px;top:349.80px;width:780.5px"></div>
<div class="t c" style="left:8px;width:19.5px;top:354.30px;color:#4444ee;font-size:10.3px;text-shadow:0.35px 0 0 #4444ee">3</div>
<div class="t r" style="left:434.3px;width:40px;top:353.80px;color:#000;font-size:9.2px">0</div>
<div class="t r" style="left:485.20000000000005px;width:40px;top:353.80px;color:#000;font-size:9.2px">0.00</div>
<div class="t r" style="left:550px;width:40px;top:353.80px;color:#000;font-size:9.2px">0.00</div>
<div class="t r" style="left:617.3px;width:40px;top:353.80px;color:#000;font-size:9.2px">0.00</div>
<div class="t r" style="left:679.8px;width:40px;top:353.80px;color:#000;font-size:9.2px">0.00</div>
<div class="hl" style="left:7px;top:367.80px;width:780.5px"></div>
<div class="t c" style="left:8px;width:19.5px;top:372.30px;color:#4444ee;font-size:10.3px;text-shadow:0.35px 0 0 #4444ee">4</div>
<div class="t r" style="left:434.3px;width:40px;top:371.80px;color:#000;font-size:9.2px">0</div>
<div class="t r" style="left:485.20000000000005px;width:40px;top:371.80px;color:#000;font-size:9.2px">0.00</div>
<div class="t r" style="left:550px;width:40px;top:371.80px;color:#000;font-size:9.2px">0.00</div>
<div class="t r" style="left:617.3px;width:40px;top:371.80px;color:#000;font-size:9.2px">0.00</div>
<div class="t r" style="left:679.8px;width:40px;top:371.80px;color:#000;font-size:9.2px">0.00</div>
<div class="hl" style="left:7px;top:385.80px;width:780.5px"></div>
<div class="t c" style="left:8px;width:19.5px;top:390.30px;color:#4444ee;font-size:10.3px;text-shadow:0.35px 0 0 #4444ee">5</div>
<div class="t r" style="left:434.3px;width:40px;top:389.80px;color:#000;font-size:9.2px">0</div>
<div class="t r" style="left:485.20000000000005px;width:40px;top:389.80px;color:#000;font-size:9.2px">0.00</div>
<div class="t r" style="left:550px;width:40px;top:389.80px;color:#000;font-size:9.2px">0.00</div>
<div class="t r" style="left:617.3px;width:40px;top:389.80px;color:#000;font-size:9.2px">0.00</div>
<div class="t r" style="left:679.8px;width:40px;top:389.80px;color:#000;font-size:9.2px">0.00</div>
<div class="hl" style="left:7px;top:403.80px;width:780.5px"></div>
<div class="t c" style="left:8px;width:19.5px;top:408.30px;color:#4444ee;font-size:10.3px;text-shadow:0.35px 0 0 #4444ee">6</div>
<div class="t r" style="left:434.3px;width:40px;top:407.80px;color:#000;font-size:9.2px">0</div>
<div class="t r" style="left:485.20000000000005px;width:40px;top:407.80px;color:#000;font-size:9.2px">0.00</div>
<div class="t r" style="left:550px;width:40px;top:407.80px;color:#000;font-size:9.2px">0.00</div>
<div class="t r" style="left:617.3px;width:40px;top:407.80px;color:#000;font-size:9.2px">0.00</div>
<div class="t r" style="left:679.8px;width:40px;top:407.80px;color:#000;font-size:9.2px">0.00</div>
<div class="hl" style="left:7px;top:421.80px;width:780.5px"></div>
<div class="t c" style="left:8px;width:19.5px;top:426.30px;color:#4444ee;font-size:10.3px;text-shadow:0.35px 0 0 #4444ee">7</div>
<div class="t r" style="left:434.3px;width:40px;top:425.80px;color:#000;font-size:9.2px">0</div>
<div class="t r" style="left:485.20000000000005px;width:40px;top:425.80px;color:#000;font-size:9.2px">0.00</div>
<div class="t r" style="left:550px;width:40px;top:425.80px;color:#000;font-size:9.2px">0.00</div>
<div class="t r" style="left:617.3px;width:40px;top:425.80px;color:#000;font-size:9.2px">0.00</div>
<div class="t r" style="left:679.8px;width:40px;top:425.80px;color:#000;font-size:9.2px">0.00</div>
<div class="hl" style="left:7px;top:439.80px;width:780.5px"></div>
<div class="t c" style="left:8px;width:19.5px;top:444.30px;color:#4444ee;font-size:10.3px;text-shadow:0.35px 0 0 #4444ee">8</div>
<div class="t r" style="left:434.3px;width:40px;top:443.80px;color:#000;font-size:9.2px">0</div>
<div class="t r" style="left:485.20000000000005px;width:40px;top:443.80px;color:#000;font-size:9.2px">0.00</div>
<div class="t r" style="left:550px;width:40px;top:443.80px;color:#000;font-size:9.2px">0.00</div>
<div class="t r" style="left:617.3px;width:40px;top:443.80px;color:#000;font-size:9.2px">0.00</div>
<div class="t r" style="left:679.8px;width:40px;top:443.80px;color:#000;font-size:9.2px">0.00</div>
<div class="hl" style="left:7px;top:457.80px;width:780.5px"></div>
<div class="t c" style="left:8px;width:19.5px;top:462.30px;color:#4444ee;font-size:10.3px;text-shadow:0.35px 0 0 #4444ee">9</div>
<div class="t r" style="left:434.3px;width:40px;top:461.80px;color:#000;font-size:9.2px">0</div>
<div class="t r" style="left:485.20000000000005px;width:40px;top:461.80px;color:#000;font-size:9.2px">0.00</div>
<div class="t r" style="left:550px;width:40px;top:461.80px;color:#000;font-size:9.2px">0.00</div>
<div class="t r" style="left:617.3px;width:40px;top:461.80px;color:#000;font-size:9.2px">0.00</div>
<div class="t r" style="left:679.8px;width:40px;top:461.80px;color:#000;font-size:9.2px">0.00</div>
<div class="hl" style="left:7px;top:475.80px;width:780.5px"></div>
<div class="t c" style="left:8px;width:19.5px;top:480.30px;color:#4444ee;font-size:10.3px;text-shadow:0.35px 0 0 #4444ee">10</div>
<div class="t r" style="left:434.3px;width:40px;top:479.80px;color:#000;font-size:9.2px">0</div>
<div class="t r" style="left:485.20000000000005px;width:40px;top:479.80px;color:#000;font-size:9.2px">0.00</div>
<div class="t r" style="left:550px;width:40px;top:479.80px;color:#000;font-size:9.2px">0.00</div>
<div class="t r" style="left:617.3px;width:40px;top:479.80px;color:#000;font-size:9.2px">0.00</div>
<div class="t r" style="left:679.8px;width:40px;top:479.80px;color:#000;font-size:9.2px">0.00</div>
<div class="hl" style="left:7px;top:493.80px;width:780.5px"></div>
<div class="t c" style="left:8px;width:19.5px;top:498.30px;color:#4444ee;font-size:10.3px;text-shadow:0.35px 0 0 #4444ee">11</div>
<div class="t r" style="left:434.3px;width:40px;top:497.80px;color:#000;font-size:9.2px">0</div>
<div class="t r" style="left:485.20000000000005px;width:40px;top:497.80px;color:#000;font-size:9.2px">0.00</div>
<div class="t r" style="left:550px;width:40px;top:497.80px;color:#000;font-size:9.2px">0.00</div>
<div class="t r" style="left:617.3px;width:40px;top:497.80px;color:#000;font-size:9.2px">0.00</div>
<div class="t r" style="left:679.8px;width:40px;top:497.80px;color:#000;font-size:9.2px">0.00</div>
<div class="hl" style="left:7px;top:511.80px;width:780.5px"></div>
<div class="t c" style="left:8px;width:19.5px;top:516.30px;color:#4444ee;font-size:10.3px;text-shadow:0.35px 0 0 #4444ee">12</div>
<div class="t r" style="left:434.3px;width:40px;top:515.80px;color:#000;font-size:9.2px">0</div>
<div class="t r" style="left:485.20000000000005px;width:40px;top:515.80px;color:#000;font-size:9.2px">0.00</div>
<div class="t r" style="left:550px;width:40px;top:515.80px;color:#000;font-size:9.2px">0.00</div>
<div class="t r" style="left:617.3px;width:40px;top:515.80px;color:#000;font-size:9.2px">0.00</div>
<div class="t r" style="left:679.8px;width:40px;top:515.80px;color:#000;font-size:9.2px">0.00</div>
<div class="hl" style="left:7px;top:529.80px;width:780.5px"></div>
<div class="t c" style="left:8px;width:19.5px;top:534.30px;color:#4444ee;font-size:10.3px;text-shadow:0.35px 0 0 #4444ee">13</div>
<div class="t r" style="left:434.3px;width:40px;top:533.80px;color:#000;font-size:9.2px">0</div>
<div class="t r" style="left:485.20000000000005px;width:40px;top:533.80px;color:#000;font-size:9.2px">0.00</div>
<div class="t r" style="left:550px;width:40px;top:533.80px;color:#000;font-size:9.2px">0.00</div>
<div class="t r" style="left:617.3px;width:40px;top:533.80px;color:#000;font-size:9.2px">0.00</div>
<div class="t r" style="left:679.8px;width:40px;top:533.80px;color:#000;font-size:9.2px">0.00</div>
<div class="hl" style="left:7px;top:547.80px;width:780.5px"></div>
<div class="t c" style="left:8px;width:19.5px;top:552.30px;color:#4444ee;font-size:10.3px;text-shadow:0.35px 0 0 #4444ee">14</div>
<div class="t r" style="left:434.3px;width:40px;top:551.80px;color:#000;font-size:9.2px">0</div>
<div class="t r" style="left:485.20000000000005px;width:40px;top:551.80px;color:#000;font-size:9.2px">0.00</div>
<div class="t r" style="left:550px;width:40px;top:551.80px;color:#000;font-size:9.2px">0.00</div>
<div class="t r" style="left:617.3px;width:40px;top:551.80px;color:#000;font-size:9.2px">0.00</div>
<div class="t r" style="left:679.8px;width:40px;top:551.80px;color:#000;font-size:9.2px">0.00</div>
<div class="hl" style="left:7px;top:565.80px;width:780.5px"></div>
<div class="vl" style="left:27.7px;top:332.30px;height:234.00px"></div>
<div class="vl" style="left:27.7px;top:314.30px;height:18.0px;background:#5f9df2"></div>
<div class="vl" style="left:119.0px;top:332.30px;height:234.00px"></div>
<div class="vl" style="left:119.0px;top:314.30px;height:18.0px;background:#5f9df2"></div>
<div class="vl" style="left:252.0px;top:332.30px;height:234.00px"></div>
<div class="vl" style="left:252.0px;top:314.30px;height:18.0px;background:#5f9df2"></div>
<div class="vl" style="left:277.9px;top:332.30px;height:234.00px"></div>
<div class="vl" style="left:277.9px;top:314.30px;height:18.0px;background:#5f9df2"></div>
<div class="vl" style="left:337.7px;top:332.30px;height:234.00px"></div>
<div class="vl" style="left:337.7px;top:314.30px;height:18.0px;background:#5f9df2"></div>
<div class="vl" style="left:380.0px;top:332.30px;height:234.00px"></div>
<div class="vl" style="left:380.0px;top:314.30px;height:18.0px;background:#5f9df2"></div>
<div class="vl" style="left:423.0px;top:332.30px;height:234.00px"></div>
<div class="vl" style="left:423.0px;top:314.30px;height:18.0px;background:#5f9df2"></div>
<div class="vl" style="left:474.0px;top:332.30px;height:234.00px"></div>
<div class="vl" style="left:474.0px;top:314.30px;height:18.0px;background:#5f9df2"></div>
<div class="vl" style="left:525.0px;top:332.30px;height:234.00px"></div>
<div class="vl" style="left:525.0px;top:314.30px;height:18.0px;background:#5f9df2"></div>
<div class="vl" style="left:590.3px;top:332.30px;height:234.00px"></div>
<div class="vl" style="left:590.3px;top:314.30px;height:18.0px;background:#5f9df2"></div>
<div class="vl" style="left:657.1px;top:332.30px;height:234.00px"></div>
<div class="vl" style="left:657.1px;top:314.30px;height:18.0px;background:#5f9df2"></div>
<div class="vl" style="left:719.7px;top:332.30px;height:234.00px"></div>
<div class="vl" style="left:719.7px;top:314.30px;height:18.0px;background:#5f9df2"></div>
<div class="vl" style="left:787.0px;top:332.30px;height:234.00px"></div>
<div class="vl" style="left:787.0px;top:314.30px;height:18.0px;background:#5f9df2"></div>
<div class="ab" style="left:7px;top:578px;width:1167px;height:21.5px;background:#afcbf0"></div>
<div class="t b" style="left:59px;top:583px;color:#8b1a1a;font-size:9.4px">合计<span class="co">:</span></div>
<div class="t r b" style="left:434.3px;width:40px;top:583px;color:#8b1a1a;font-size:9.2px">0</div>
<div class="t r b" style="left:617.3px;width:40px;top:583px;color:#8b1a1a;font-size:9.2px">0.00</div>
<div class="t r b" style="left:679.8px;width:40px;top:583px;color:#8b1a1a;font-size:9.2px">0.00</div>
<div class="ab" style="left:1174px;top:296px;width:13px;height:303.5px;background:#fafafa"></div>
<div class="ab" style="left:1174px;top:296px;width:13px;height:11.5px;background:#f0f0f0;border-right:1px solid #777;border-bottom:1px solid #777"></div><div class="ab" style="left:1177.5px;top:300px;width:0;height:0;border:3px solid transparent;border-bottom:3px solid #000;border-top:none"></div>
<div class="ab" style="left:1174px;top:307.5px;width:13px;height:130px;background:#f0f0f0;border-right:1px solid #777;border-bottom:1px solid #777"></div>
<div class="ab" style="left:1174px;top:587.5px;width:13px;height:11.5px;background:#f0f0f0;border-right:1px solid #777;border-bottom:1px solid #777"></div><div class="ab" style="left:1177.5px;top:592px;width:0;height:0;border:3px solid transparent;border-top:3px solid #000;border-bottom:none"></div>
<div class="ab" style="left:7px;top:599.5px;width:1167px;height:11.5px;background:#fafafa"></div>
<div class="ab" style="left:6.5px;top:599.5px;width:7px;height:11.5px;background:#6a6a6a"></div>
<div class="ab" style="left:14px;top:599.5px;width:12.5px;height:11.5px;background:#f4f4f4;border-right:1px solid #777"></div><div class="ab" style="left:17.5px;top:602.5px;width:0;height:0;border:3px solid transparent;border-right:3px solid #000;border-left:none"></div>
<div class="ab" style="left:26.5px;top:599.5px;width:1087.5px;height:11.5px;background:#f0f0f0;border-right:1px solid #777"></div>
<div class="ab" style="left:1162px;top:599.5px;width:12px;height:11.5px;background:#f4f4f4;border-right:1px solid #777"></div><div class="ab" style="left:1166.5px;top:602.5px;width:0;height:0;border:3px solid transparent;border-left:3px solid #000;border-right:none"></div>
<div class="ab" style="left:1174px;top:599.5px;width:13px;height:11.5px;background:#c8c8c8"></div>
</body></html>
